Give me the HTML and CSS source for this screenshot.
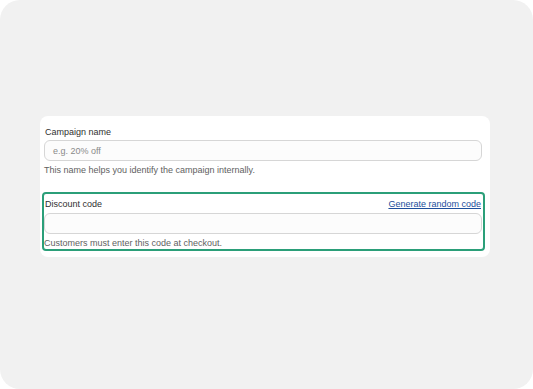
FILE: index.html
```html
<!DOCTYPE html>
<html lang="en">
<head>
    <meta charset="UTF-8">
    <title>Discount</title>
    <link rel="stylesheet" href="styles.css">
</head>
<body>
<div class="frame">
    <div class="card">
        <div class="field">
            <div class="label-row">
                <span class="label">Campaign name</span>
            </div>
            <div class="input"><span class="placeholder">e.g. 20% off</span></div>
            <div class="help">This name helps you identify the campaign internally.</div>
        </div>
        <div class="field field-focus">
            <div class="label-row">
                <span class="label">Discount code</span>
                <a class="link" href="#">Generate random code</a>
            </div>
            <div class="input"></div>
            <div class="help">Customers must enter this code at checkout.</div>
        </div>
    </div>
</div>
</body>
</html>
```

FILE: styles.css
```css
html,body{
    margin: 0;
    background: #fff;
}
body{
    font-family: "Liberation Sans", Arial, sans-serif;
    -webkit-font-smoothing: antialiased;
}

.frame{
    width: 533px;
    height: 389px;
    background: #f1f1f1;
    border-radius: 20px;
    padding: 116px 0 0 40px;
    box-sizing: border-box;
}

.card{
    width: 450px;
    height: 141px;
    background: #fff;
    border-radius: 8px;
    box-sizing: border-box;
    padding: 10px 8px 0 4px;
}

.field{
    width: 438px;
}

.label-row{
    display: flex;
    justify-content: space-between;
    align-items: center;
    height: 12px;
    padding-left: 1px;
}

.label{
    font-size: 9px;
    line-height: 12px;
    color: #303030;
}

.link{
    font-size: 9px;
    line-height: 12px;
    color: #1d4f9c;
    text-decoration: underline;
    margin-right: 1px;
}

.input{
    margin-top: 2px;
    height: 21px;
    box-sizing: border-box;
    border: 1px solid #d6d6d6;
    border-radius: 6px;
    background: #fcfcfc;
    display: flex;
    align-items: center;
    padding-left: 8px;
}

.placeholder{
    font-size: 9px;
    color: #8a8a8a;
}

.help{
    margin-top: 3px;
    font-size: 9px;
    line-height: 12px;
    color: #616161;
}

.field-focus{
    margin: 16px 0 0 -2px;
    width: 443px;
    border: 2px solid #2b9f79;
    border-radius: 4px;
    padding: 4px 1px 0 0;
    height: 59px;
    box-sizing: border-box;
}

.field-focus .input{
    width: 438px;
    margin-top: 3px;
}
```
